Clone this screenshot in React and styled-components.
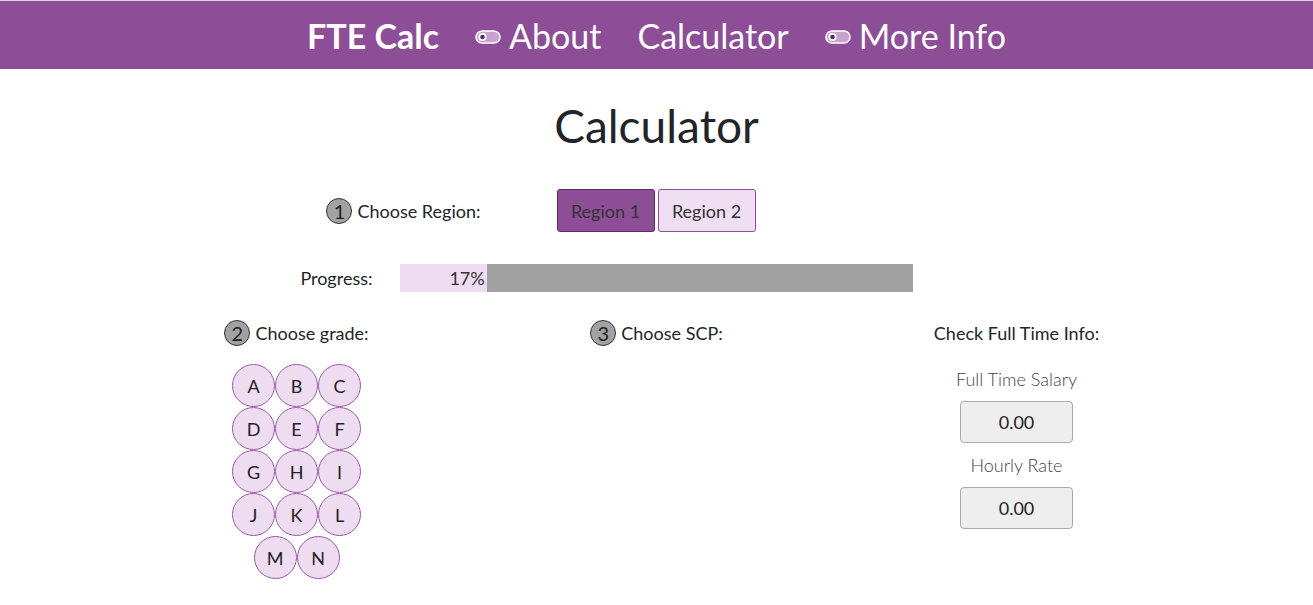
import styled, { createGlobalStyle } from "styled-components";
import { useState } from "react";

const GlobalStyle = createGlobalStyle`
  body {
    margin: 0;
    font-family: Lato, "Open Sans", sans-serif;
    color: #212529;
    background: #fff;
  }
`;

const grades = ["A", "B", "C", "D", "E", "F", "G", "H", "I", "J", "K", "L", "M", "N"];

const Toggle = () => (
  <svg width="26" height="14" viewBox="0 0 26 14">
    <rect x="1" y="1" width="24" height="12" rx="6" fill="#c9a3cf" stroke="#fff" strokeWidth="1.6" />
    <circle cx="7.5" cy="7" r="4" fill="#fff" />
    <circle cx="7.5" cy="7" r="2.3" fill="#5a2a64" />
  </svg>
);

const App = () => {
  const [region, setRegion] = useState(1);

  return (
    <>
      <GlobalStyle />
      <Nav>
        <Brand>FTE Calc</Brand>
        <NavItem>
          <Toggle />
          About
        </NavItem>
        <NavItem>Calculator</NavItem>
        <NavItem>
          <Toggle />
          More Info
        </NavItem>
      </Nav>

      <Main>
        <Title>Calculator</Title>

        <RegionRow>
          <StepLabel width="254px">
            <Step>1</Step>Choose Region:
          </StepLabel>
          <Buttons>
            <RegionBtn active={region === 1} onClick={() => setRegion(1)}>
              Region 1
            </RegionBtn>
            <RegionBtn active={region === 2} onClick={() => setRegion(2)}>
              Region 2
            </RegionBtn>
          </Buttons>
        </RegionRow>

        <ProgressRow>
          <ProgressLabel>Progress:</ProgressLabel>
          <Bar>
            <Fill style={{ width: "17%" }}>17%</Fill>
          </Bar>
        </ProgressRow>

        <Columns>
          <Column>
            <StepLabel>
              <Step>2</Step>Choose grade:
            </StepLabel>
            <GradeGrid>
              {grades.map((g) => (
                <Grade key={g}>{g}</Grade>
              ))}
            </GradeGrid>
          </Column>
          <Column>
            <StepLabel>
              <Step>3</Step>Choose SCP:
            </StepLabel>
          </Column>
          <Column>
            <StepLabel>Check Full Time Info:</StepLabel>
            <InfoLabel>Full Time Salary</InfoLabel>
            <InfoBox>0.00</InfoBox>
            <InfoLabel>Hourly Rate</InfoLabel>
            <InfoBox>0.00</InfoBox>
          </Column>
        </Columns>
      </Main>
    </>
  );
};

const Nav = styled.nav`
  display: flex;
  align-items: center;
  justify-content: center;
  gap: 36px;
  height: 68px;
  background: #8d4e97;
  border-top: 1px solid #d6d6d6;
  color: #fff;
  font-size: 34px;
`;

const Brand = styled.div`
  font-weight: 700;
`;

const NavItem = styled.div`
  display: flex;
  align-items: center;
  gap: 8px;

  svg {
    margin-top: 3px;
  }
`;

const Main = styled.main`
  width: 1080px;
  margin: 0 auto;
`;

const Title = styled.h1`
  margin: 32px 0 0;
  font-size: 46px;
  font-weight: 400;
  line-height: 50px;
  text-align: center;
  color: #212529;
`;

const RegionRow = styled.div`
  display: flex;
  align-items: center;
  margin-top: 38px;
  padding-left: 160px;
`;

const StepLabel = styled.div`
  display: flex;
  align-items: center;
  justify-content: center;
  width: ${(props) => props.width || "auto"};
  height: 26px;
  font-size: 18px;
`;

const Step = styled.span`
  display: inline-flex;
  align-items: center;
  justify-content: center;
  width: 24px;
  height: 24px;
  margin-right: 5px;
  border-radius: 50%;
  border: 1px solid #333;
  background: #a2a2a2;
  font-size: 20px;
  color: #222;
`;

const Buttons = styled.div`
  display: flex;
  gap: 3px;
  margin-left: 26px;
`;

const RegionBtn = styled.button`
  width: 98px;
  height: 43px;
  border-radius: 3px;
  border: 1px solid ${(props) => (props.active ? "#5b2b64" : "#8d4e97")};
  background: ${(props) => (props.active ? "#8d4e97" : "#f0dff2")};
  color: #333;
  font-family: Lato, sans-serif;
  font-size: 18px;
  cursor: pointer;
  padding: 0;
`;

const ProgressRow = styled.div`
  display: flex;
  align-items: center;
  margin-top: 32px;
`;

const ProgressLabel = styled.div`
  width: 256px;
  text-align: right;
  font-size: 18px;
  margin-right: 27px;
`;

const Bar = styled.div`
  display: flex;
  width: 513px;
  height: 28px;
  background: #a1a1a1;
`;

const Fill = styled.div`
  display: flex;
  align-items: center;
  justify-content: flex-end;
  background: #eedcf0;
  font-size: 18px;
  color: #333;
  padding-right: 2px;
  box-sizing: border-box;
`;

const Columns = styled.div`
  display: grid;
  grid-template-columns: repeat(3, 360px);
  margin-top: 28px;
`;

const Column = styled.div`
  display: flex;
  flex-direction: column;
  align-items: center;
`;

const GradeGrid = styled.div`
  display: flex;
  flex-wrap: wrap;
  justify-content: center;
  width: 129px;
  margin-top: 18px;
`;

const Grade = styled.div`
  display: flex;
  align-items: center;
  justify-content: center;
  width: 43px;
  height: 43px;
  box-sizing: border-box;
  border-radius: 50%;
  border: 1px solid #9a5aa4;
  background: #eedcf0;
  font-size: 18px;
  color: #222;
  cursor: pointer;
`;

const InfoLabel = styled.div`
  margin-top: 23px;
  font-size: 18px;
  font-weight: 300;
  color: #444;
  line-height: 20px;

  & + div {
    margin-top: 12px;
  }
`;

const InfoBox = styled.div`
  display: flex;
  align-items: center;
  justify-content: center;
  width: 113px;
  height: 42px;
  box-sizing: border-box;
  background: #eee;
  border: 1px solid #aaa;
  border-radius: 4px;
  font-size: 18px;
  color: #222;

  & + div {
    margin-top: 12px;
  }
`;

export default App;
